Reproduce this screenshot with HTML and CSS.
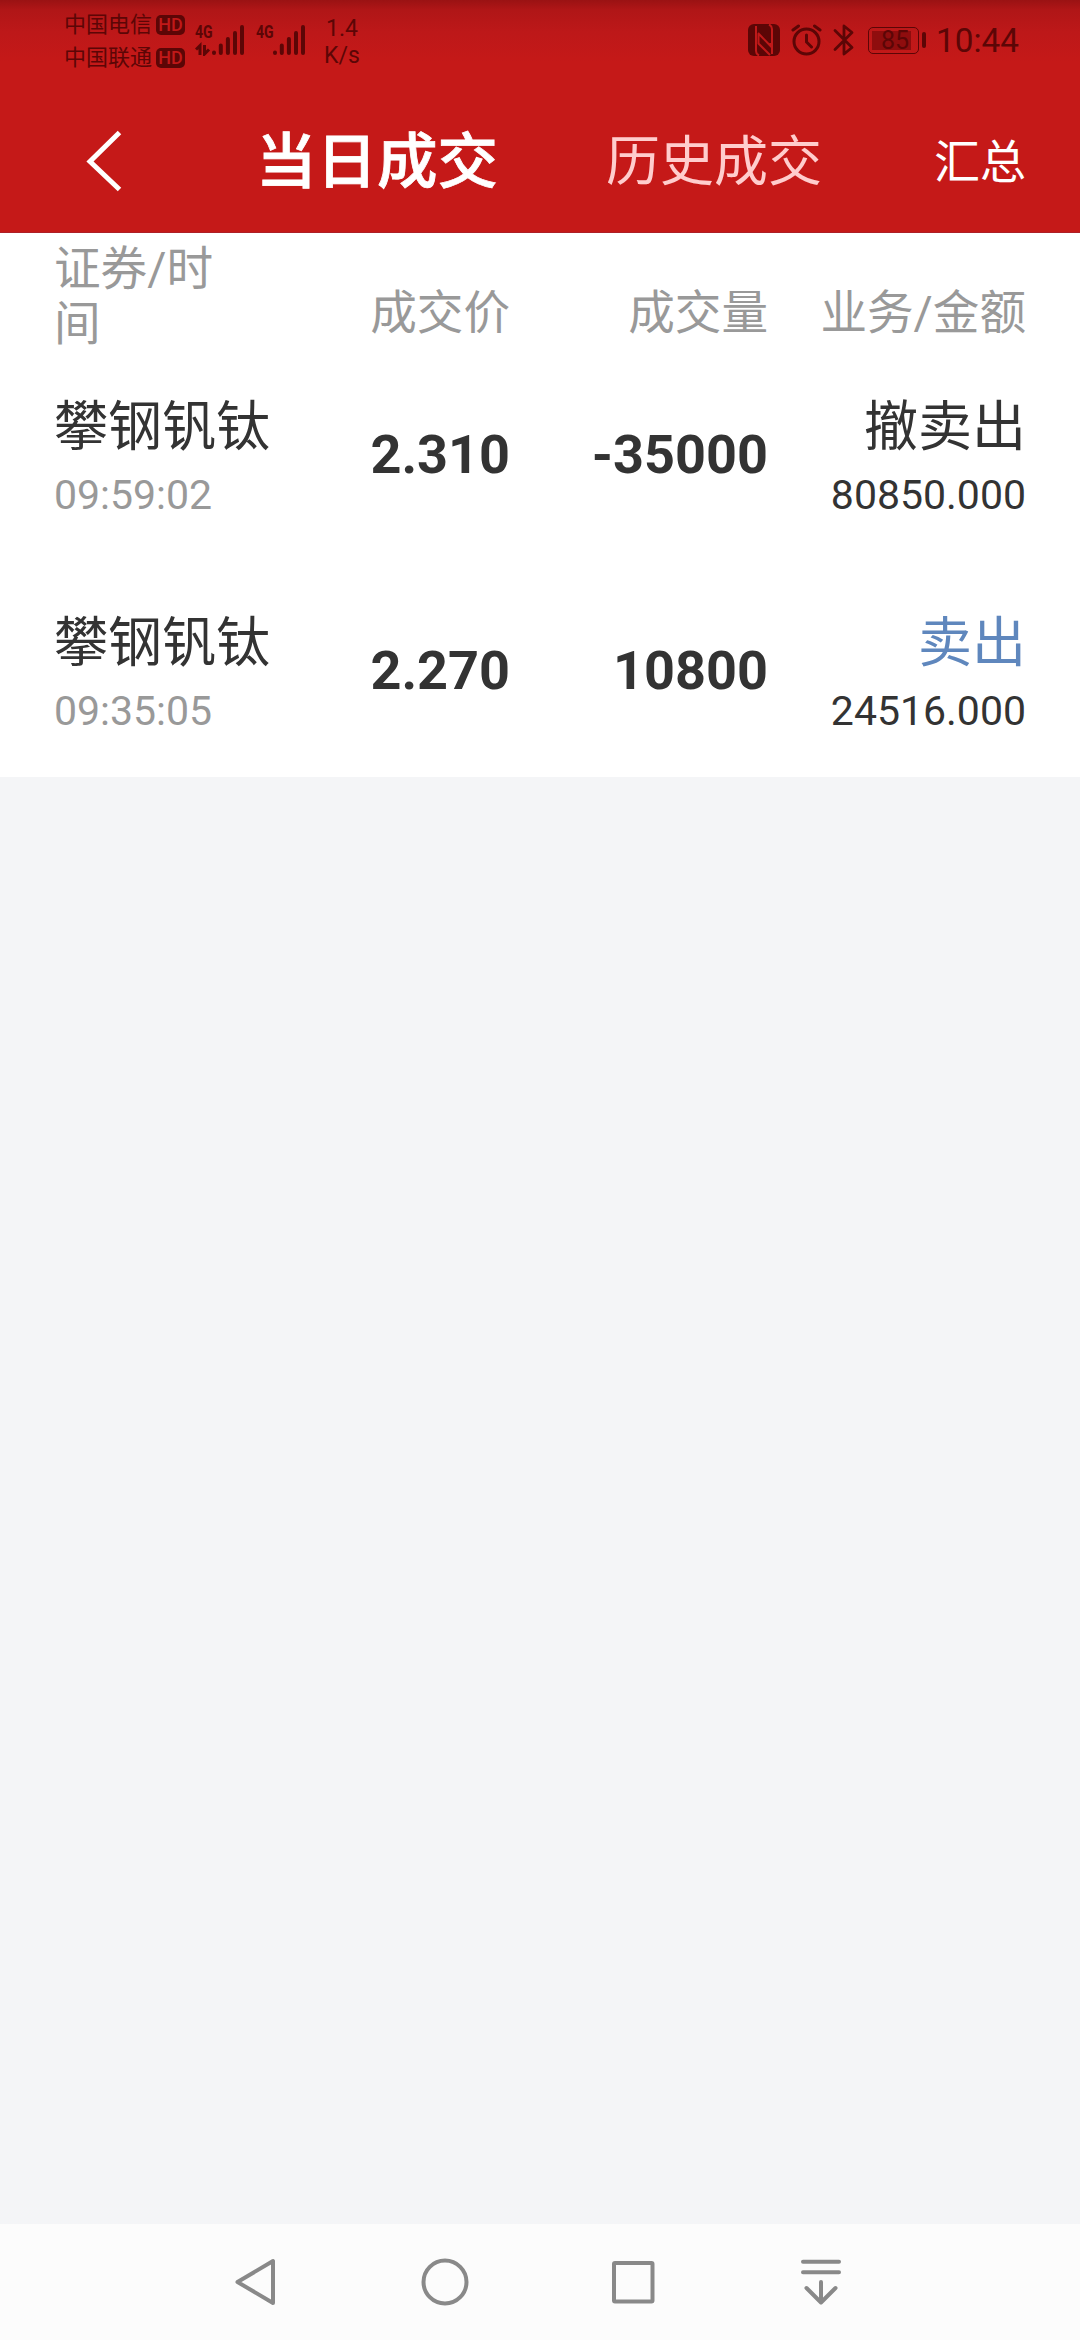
FILE: index.html
```html
<!DOCTYPE html>
<html lang="zh-CN">
<head>
<meta charset="utf-8">
<title>当日成交</title>
<link rel="stylesheet" href="styles.css">
</head>
<body>
<div class="screen">
  <header class="top">
    <div class="status">
      <div class="carriers">
        <div class="carrier"><span>中国电信</span><span class="hd">HD</span></div>
        <div class="carrier"><span>中国联通</span><span class="hd">HD</span></div>
      </div>
      <div class="signal">
        <span class="net">4G</span>
        <svg class="bars" width="50" height="32" viewBox="0 0 50 32" fill="none" stroke="currentColor" stroke-width="4" stroke-linecap="round">
          <path d="M19 28.5v.5M25.800 21.500v7.500M32.900 15v14M40 9v20M47 3v26"/>
          <path d="M1 25.500l4-4v9.500M9.500 21v9l4.500-4.500" stroke-width="3" stroke-linecap="butt"/>
        </svg>
      </div>
      <div class="signal signal-two">
        <span class="net">4G</span>
        <svg class="bars" width="50" height="32" viewBox="0 0 50 32" fill="none" stroke="currentColor" stroke-width="4" stroke-linecap="round">
          <path d="M19 28.500v.5M25.800 21.500v7.500M32.900 15v14M40 9v20M47 3v26"/>
        </svg>
      </div>
      <div class="speed"><span>1.4</span><span>K/s</span></div>
      <div class="system">
        <svg width="32" height="32" viewBox="0 0 32 32">
          <rect width="32" height="32" rx="6" fill="currentColor"/>
          <path class="cut" d="M8 2v25q0 3 3 4.500M24 30V5q0-3-3-4.500M22.500 22.500V19M10.500 9.500v3M10 9l13.500 14M10.500 11v8.500L22 31"/>
        </svg>
        <svg class="alarm" width="31" height="32" viewBox="0 0 31 32" fill="none" stroke="currentColor" stroke-width="3" stroke-linecap="round">
          <circle cx="15.500" cy="17.500" r="12.500"/><path d="M15.500 11v7l5 5M2 6l5.500-4M29 6l-5.500-4"/>
        </svg>
        <svg class="bluetooth" width="22" height="32" viewBox="0 0 22 32" fill="none" stroke="currentColor" stroke-width="2.800" stroke-linecap="round" stroke-linejoin="round">
          <path d="M2 6.500l17 17-8 6.500V2l8 6.500-17 17"/>
        </svg>
        <div class="battery"><span class="level">85</span></div>
        <i class="nub"></i>
        <time class="clock">10:44</time>
      </div>
    </div>
    <nav class="tabs">
      <svg class="back" width="36" height="62" viewBox="0 0 36 62" fill="none" stroke="currentColor" stroke-width="5"><path d="M33.500 2.500L4 31.500l29.500 28"/></svg>
      <span class="tab active">当日成交</span>
      <span class="tab">历史成交</span>
      <span class="summary">汇总</span>
    </nav>
  </header>
  <main class="list">
    <div class="grid head">
      <span class="first">证券/时间</span><span>成交价</span><span>成交量</span><span>业务/金额</span>
    </div>
    <div class="grid row">
      <div class="cell"><span class="name">攀钢钒钛</span><span class="sub muted">09:59:02</span></div>
      <strong>2.310</strong><strong>-35000</strong>
      <div class="cell end"><span class="name">撤卖出</span><span class="sub">80850.000</span></div>
    </div>
    <div class="grid row">
      <div class="cell"><span class="name">攀钢钒钛</span><span class="sub muted">09:35:05</span></div>
      <strong>2.270</strong><strong>10800</strong>
      <div class="cell end"><span class="name sell">卖出</span><span class="sub">24516.000</span></div>
    </div>
  </main>
  <footer class="keys">
    <svg width="50" height="50" viewBox="0 0 50 50"><path d="M41 4v42L5.500 25z"/></svg>
    <svg width="50" height="50" viewBox="0 0 50 50"><circle cx="25" cy="25" r="21.500"/></svg>
    <svg width="50" height="50" viewBox="0 0 50 50"><rect x="6" y="6" width="38.500" height="38.500" rx="1"/></svg>
    <svg width="50" height="50" viewBox="0 0 50 50"><path d="M7 4.800h36M7 15.200h36M25 25v20M10.500 31L25 45.500 39.500 31"/></svg>
  </footer>
</div>
</body>
</html>
```
FILE: styles.css
```css
* { box-sizing: border-box; }
body {
  margin: 0;
  font-family: Roboto, "Noto Sans CJK SC", sans-serif;
  color: #333;
}
.screen {
  display: flex;
  flex-direction: column;
  width: 1080px;
  height: 2340px;
  background: #f4f5f7;
}
.top {
  height: 233px;
  background: linear-gradient(#9a1213 0, #b01617 10px, #bd1819 32px, #c51918 62px);
  border-bottom: 1px solid #ad2028;
  color: #fff;
}
.status {
  display: flex;
  height: 80px;
  padding: 7px 61px 0 64px;
  color: #5c0606;
}
.carriers { width: 131px; padding-top: 1px; }
.carrier {
  display: flex;
  align-items: center;
  gap: 4px;
  height: 33px;
  font-size: 22px;
  line-height: 33px;
}
.hd {
  width: 29px;
  height: 20px;
  border-radius: 5px;
  background: #5c0606;
  color: #c01919;
  font-size: 18px;
  font-weight: 500;
  line-height: 20px;
  text-align: center;
}
.signal {
  display: grid;
  width: 50px;
  height: 32px;
  margin-top: 17px;
}
.signal > * { grid-area: 1 / 1; }
.signal-two { margin-left: 11px; }
.net {
  font-size: 19px;
  font-weight: 700;
  line-height: 15px;
  transform: scaleX(.74);
  transform-origin: left;
}
.speed {
  display: flex;
  flex-direction: column;
  width: 36px;
  margin-left: 18px;
  margin-top: 8px;
  font-size: 23px;
  line-height: 27px;
  text-align: center;
}
.system {
  display: flex;
  align-items: center;
  height: 66px;
  margin-left: auto;
}
.cut { fill: none; stroke: #bf1919; stroke-width: 2; }
.alarm { margin-left: 11px; }
.bluetooth { margin-left: 11px; }
.battery {
  width: 51px;
  height: 27px;
  margin-left: 13px;
  padding: 3px;
  border: 1.5px solid #5c0606;
  border-radius: 5px;
}
.level {
  display: block;
  width: 39px;
  height: 19px;
  background: #8f0d0e;
  font-size: 25px;
  line-height: 19px;
  text-align: right;
  padding-right: 2px;
}
.nub { width: 4px; height: 16px; margin-left: 3px; border-radius: 2px; background: #5c0606; }
.clock { margin-left: 10px; font-size: 33.300px; line-height: 69px; padding-top: 1px; }
.tabs {
  display: flex;
  align-items: center;
  height: 160px;
  padding: 0 54px 0 86px;
}
.back { margin-top: 2px; }
.tab { margin-top: 5px; margin-left: 108px; font-size: 54px; color: #ffcdcd; line-height: 80px; }
.active { margin-left: 134px; font-size: 60.500px; font-weight: 500; color: #fff; -webkit-text-stroke: .8px #fff; }
.summary { margin-left: auto; margin-top: -4px; font-size: 46px; }
.list { height: 544px; background: #fff; }
.grid {
  display: grid;
  grid-template-columns: 198px 258px 258px 258px;
  padding: 0 54px;
  text-align: right;
}
.head {
  height: 112px;
  font-size: 46.600px;
  line-height: 54.500px;
  color: #999;
}
.head span { padding-top: 53px; }
.head .first { padding-top: 9px; text-align: left; }
.row { height: 216px; }
.row strong { font-size: 54px; line-height: 220px; }
.cell { display: flex; flex-direction: column; padding-top: 43px; text-align: left; white-space: nowrap; }
.end { text-align: right; }
.name { font-size: 54px; line-height: 80px; }
.sub { font-size: 41px; line-height: 54px; }
.muted { color: #999; }
.sell { color: #5f87bd; }
.keys {
  display: flex;
  justify-content: space-between;
  align-items: center;
  height: 116px;
  margin-top: auto;
  padding: 0 234px 0 232px;
  background: #fcfcfc;
}
.keys svg { fill: none; stroke: #898989; stroke-width: 4; stroke-linecap: round; stroke-linejoin: round; }
```
